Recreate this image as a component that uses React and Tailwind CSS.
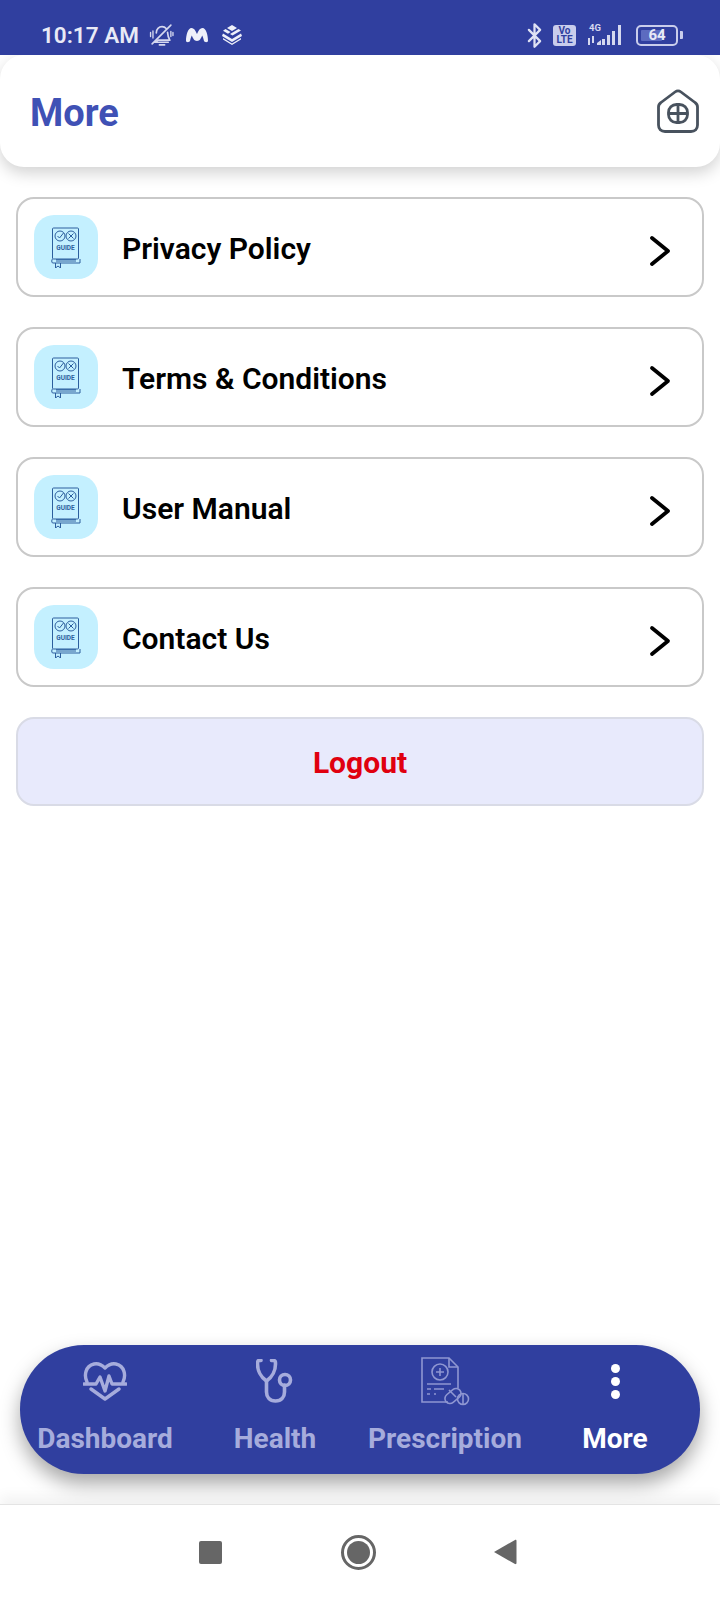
import { Bluetooth } from 'lucide-react';

const items = ['Privacy Policy', 'Terms & Conditions', 'User Manual', 'Contact Us'];

function GuideIcon() {
    return (
        <svg width="30" height="41" viewBox="0 0 30 41" fill="none" stroke="#2c5f9e" strokeWidth="1">
            <rect x="1.500" y="1" width="26" height="31" rx="1" />
            <path d="M1.500 32c-1 1-1 3 0 4h27.500" />
            <path d="M29 32v4M5 34h20" />
            <path d="M5 32.500h20" strokeWidth="0.800" />
            <circle cx="9" cy="9" r="5" />
            <path d="M6.500 9l2 2 4-5" />
            <circle cx="20" cy="9" r="5" />
            <path d="M17.500 6.500l5 5M22.500 6.500l-5 5" />
            <text x="14.500" y="23" textAnchor="middle" fontSize="6.500" fontWeight="700" fill="#2c5f9e" stroke="none" fontFamily="Roboto, sans-serif">GUIDE</text>
            <path d="M4.500 36v5l2.500-2 2.500 2v-5" />
        </svg>
    );
}

function StatusBar() {
    return (
        <div className="relative z-20 h-[55px] bg-[#303f9f] flex items-center justify-between pl-[41px] pr-[37px] pt-[15px] text-[#e8eaf6]">
            <div className="flex items-center">
                <span className="text-[22.500px] font-semibold leading-none">10:17 AM</span>
                <svg className="ml-[10px]" width="25" height="25" viewBox="0 0 24 24" fill="none" stroke="#d5d8ef" strokeWidth="1.600" strokeLinecap="round" strokeLinejoin="round">
                    <path d="M7 9.500C7 6 9.500 3.500 12.500 3.500c1.500 0 3 .6 4 1.800M17.800 9c.2 3 1 5.500 2.200 7.500H8.500L5.500 18.500h13" />
                    <path d="M10 21h5M3 20L21 2" />
                    <path d="M1.500 9v4M3.800 7.500v7M21 8v5M23 9v3" strokeWidth="1.300" />
                </svg>
                <svg className="ml-[11px]" width="24" height="22" viewBox="0 0 24 18" fill="#eef0fa">
                    <path d="M1 15C1 9 3 2 6.500 2 9.500 2 11 6 12 8 13 6 14.500 2 17.500 2 21 2 23 9 23 15c0 1.500-3.500 1.500-4 0-.5-2-1-4-1.800-5.500C16 12 15 15 12 15S8 12 6.800 9.500C6 11 5.500 13 5 15c-.5 1.500-4 1.500-4 0z" />
                </svg>
                <svg className="ml-[12px]" width="22" height="22" viewBox="0 0 22 22" fill="#eef0fa">
                    <path d="M11 1l5 3-5 3-5-3zM4.500 5l5 3-2.500 1.700-5-3zM17.500 5l2.500 1.500-8.500 5-2.500-1.500zM2 9.500l9 5.500 9-5.500 1 2.500-10 6-10-6zM2 14l9 5.500 9-5.500v1.500l-9 5.500-9-5.500z" />
                </svg>
            </div>
            <div className="flex items-center">
                <Bluetooth size={27} strokeWidth={2} color="#dfe2f4" />
                <div className="ml-[5px] w-[23px] h-[21px] rounded-[3px] bg-[#c9cdec] text-[#303f9f] text-[10px] font-bold leading-[9.500px] flex flex-col items-center justify-center">
                    <span>Vo</span>
                    <span>LTE</span>
                </div>
                <svg className="ml-[11px]" width="38" height="24" viewBox="0 0 38 24" fill="#d5d8ef">
                    <text x="2" y="8" fontSize="9.500" fontWeight="700" fontFamily="Roboto, sans-serif">4G</text>
                    <path d="M1 15h2v7H1zM5 13h2v7H5zM10 20l4-3v5h-4zM15 16h3v6h-3zM20 12h3v10h-3zM25 8h3v14h-3zM31 2h3v20h-3z" />
                </svg>
                <div className="ml-[11px] flex items-center">
                    <div className="relative w-[42px] h-[21px] rounded-[5px] border-2 border-[#c9cdec] flex items-center justify-center">
                        <div className="absolute left-[3px] top-[3px] bottom-[3px] w-[21px] bg-[#5c6bc0] rounded-[1px]" />
                        <span className="relative text-[15px] font-bold leading-none text-[#e8eaf6]">64</span>
                    </div>
                    <div className="ml-[2px] w-[3px] h-[8px] bg-[#c9cdec] rounded-r-[1px]" />
                </div>
            </div>
        </div>
    );
}

function MenuRow({ label }) {
    return (
        <div className="h-[100px] rounded-[18px] border-2 border-[#c9c9c9] bg-white flex items-center pl-[16px] pr-[31px]">
            <div className="w-[64px] h-[64px] rounded-[20px] bg-[#c4f0ff] flex items-center justify-center shrink-0">
                <GuideIcon />
            </div>
            <p className="ml-[24px] pt-[4px] flex-1 text-[30px] leading-none font-semibold text-black">{label}</p>
            <svg className="shrink-0 mt-[7px]" width="22" height="32" viewBox="0 0 22 32" fill="none" stroke="#000" strokeWidth="3.800" strokeLinecap="round" strokeLinejoin="round">
                <path d="M3 3l16 13L3 29" />
            </svg>
        </div>
    );
}

function HeartIcon() {
    return (
        <svg width="44" height="40" viewBox="0 0 44 40" fill="none" stroke="#a6acdc" strokeWidth="3.400" strokeLinejoin="round" strokeLinecap="round">
            <path d="M4 21C1 15 2 5 11 3c5-1 8 1 11 4 3-3 6-5 11-4 9 2 10 12 7 18" />
            <path d="M1 23h12l4-7 5 14 4-15 3 8h14" />
            <path d="M8 28l14 10 14-10" />
        </svg>
    );
}

function StethoscopeIcon() {
    return (
        <svg width="38" height="44" viewBox="0 0 38 44" fill="none" stroke="#a6acdc" strokeWidth="3.600" strokeLinecap="round">
            <path d="M5 1.500H3C1.500 1.500 1.500 3 1.500 5c0 6 3 13 9 17 6-4 9-11 9-17 0-2 0-3.500-2-3.500h-2" />
            <path d="M10.500 22v11c0 5 3 9 9 9s9-4 9-9v-7" />
            <circle cx="29" cy="21" r="5.500" />
        </svg>
    );
}

function PrescriptionIcon() {
    return (
        <svg width="50" height="50" viewBox="0 0 50 50" fill="none" stroke="#8f97d2" strokeWidth="1.600">
            <path d="M28 46H2V2h27l9 9v21" />
            <path d="M29 2v9h9" />
            <circle cx="20" cy="16" r="8" />
            <path d="M20 12v8M16 16h8M7 28h24M7 33h4M14 33h10M7 38h3M14 38h2" />
            <rect x="24" y="35" width="18" height="10" rx="5" transform="rotate(-40 33 40)" />
            <path d="M29 34l7 7" />
            <circle cx="43" cy="43" r="5.500" />
            <path d="M43 38v10" />
        </svg>
    );
}

function NavItem({ icon, label, active }) {
    return (
        <div className="flex flex-col items-center">
            <div className="h-[48px] flex items-center justify-center">{icon}</div>
            <span className={`mt-[17px] text-[28px] leading-[34px] font-bold ${active ? 'text-white' : 'text-[#a6acdc]'}`}>{label}</span>
        </div>
    );
}

export default function App() {
    return (
        <div className="w-[720px] h-[1600px] bg-white flex flex-col overflow-hidden font-['Roboto',sans-serif]">
            <StatusBar />
            <header className="relative z-10 h-[112px] rounded-[24px] bg-white shadow-[0_6px_16px_rgba(0,0,0,0.18)] flex items-center justify-between pl-[30px] pr-[21px]">
                <h1 className="pt-[4px] text-[38px] leading-none font-bold text-[#3f51b5]">More</h1>
                <svg width="42" height="44" viewBox="0 0 42 44" fill="none" stroke="#48525e" strokeWidth="2.800" strokeLinejoin="round">
                    <path d="M1.500 18c0-2 1-3.500 2.500-4.500L18 3c2-1.500 4-1.500 6 0l14 10.500c1.500 1 2.500 2.500 2.500 4.500v18c0 4-2.500 6.500-6.500 6.500H8c-4 0-6.500-2.500-6.500-6.500z" />
                    <rect x="11.500" y="15.500" width="19" height="18" rx="8" />
                    <path d="M21 15.500v18M11.500 24.500h19" />
                </svg>
            </header>

            <main className="flex-1 px-[16px] pt-[30px]">
                <div className="flex flex-col gap-[30px]">
                    {items.map(item => <MenuRow key={item} label={item} />)}
                </div>
                <button className="mt-[30px] w-full h-[89px] rounded-[18px] border-2 border-[#d9dbe6] bg-[#e8eafc] pt-[1px] text-[30px] font-bold text-[#e0000f]">
                    Logout
                </button>
            </main>

            <nav className="mx-[20px] mb-[30px] h-[129px] rounded-[64px] bg-[#303f9f] shadow-[0_10px_20px_rgba(0,0,0,0.35)] grid grid-cols-4 pt-[12px]">
                <NavItem icon={<HeartIcon />} label="Dashboard" />
                <NavItem icon={<StethoscopeIcon />} label="Health" />
                <NavItem icon={<PrescriptionIcon />} label="Prescription" />
                <NavItem
                    active
                    label="More"
                    icon={
                        <div className="flex flex-col gap-[4px]">
                            <span className="w-[9px] h-[9px] rounded-full bg-white" />
                            <span className="w-[9px] h-[9px] rounded-full bg-white" />
                            <span className="w-[9px] h-[9px] rounded-full bg-white" />
                        </div>
                    }
                />
            </nav>

            <div className="h-[96px] border-t border-[#e4e4e4] bg-white shadow-[0_-8px_12px_rgba(0,0,0,0.05)] flex items-center pl-[199px] pb-[1px]">
                <div className="w-[23px] h-[23px] rounded-[2px] bg-[#666]" />
                <div className="ml-[119px] w-[35px] h-[35px] rounded-full border-[3px] border-[#666] flex items-center justify-center">
                    <div className="w-[23px] h-[23px] rounded-full bg-[#666]" />
                </div>
                <svg className="ml-[117px]" width="24" height="26" viewBox="0 0 24 26" fill="#666">
                    <path d="M1 13L22 1c.8-.4 1.500 0 1.500 1v22c0 1-.7 1.400-1.500 1z" />
                </svg>
            </div>
        </div>
    );
}
